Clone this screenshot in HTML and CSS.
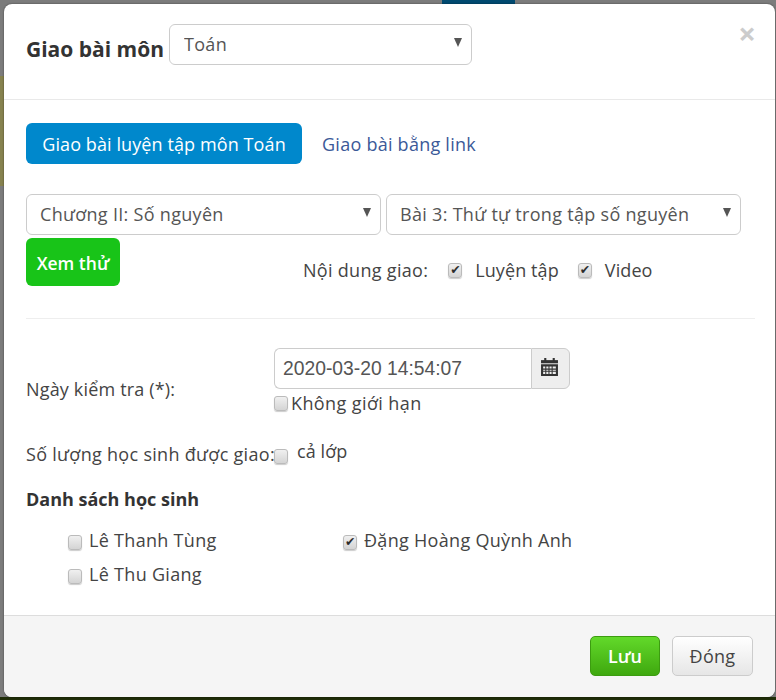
FILE: index.html
```html
<!DOCTYPE html>
<html lang="en">
<head>
    <meta charset="UTF-8">
    <meta name="viewport" content="width=device-width, initial-scale=1.0">
    <title>Giao bài</title>
    <link rel="stylesheet" href="styles.css">
</head>
<body>
    <!-- page behind the backdrop -->
    <div class="behind-tab"></div>
    <div class="behind-panel"></div>
    <div class="behind-bottom"></div>

    <div class="modal-card">
        <div class="modal-header">
            <span class="modal-title">Giao bài môn</span>
            <div class="select-wrap subject-select">
                <select><option>Toán</option></select>
            </div>
            <span class="close-btn">×</span>
        </div>

        <div class="modal-body">
            <div class="tab-row">
                <a class="btn-tab">Giao bài luyện tập môn Toán</a>
                <a class="link-tab">Giao bài bằng link</a>
            </div>

            <div class="select-row">
                <div class="select-wrap"><select><option>Chương II: Số nguyên</option></select></div>
                <div class="select-wrap"><select><option>Bài 3: Thứ tự trong tập số nguyên</option></select></div>
            </div>

            <div class="preview-row">
                <a class="btn-preview">Xem thử</a>
                <div class="content-type">
                    <span class="content-label">Nội dung giao:</span>
                    <label class="check-label"><input type="checkbox" checked><span>Luyện tập</span></label>
                    <label class="check-label"><input type="checkbox" checked><span>Video</span></label>
                </div>
            </div>

            <div class="divider"></div>

            <div class="date-row">
                <div class="row-label">Ngày kiểm tra (*):</div>
                <div class="date-col">
                    <div class="date-group">
                        <input class="date-input" type="text" value="2020-03-20 14:54:07">
                        <span class="date-addon">
                            <svg class="calendar-icon" width="17" height="18" viewBox="0 0 16 17">
                                <rect x="3" y="0" width="2" height="3" fill="#333"/>
                                <rect x="11" y="0" width="2" height="3" fill="#333"/>
                                <rect x="0" y="2" width="16" height="3" fill="#333"/>
                                <path fill="#333" fill-rule="evenodd" d="M0 6h16v11H0z M2 8v2h2V8z M5 8v2h2V8z M8 8v2h2V8z M11 8v2h3V8z M2 11v1h2v-1z M5 11v1h2v-1z M8 11v1h2v-1z M11 11v1h3v-1z M2 13v2h2v-2z M5 13v2h2v-2z M8 13v2h2v-2z M11 13v2h3v-2z"/>
                            </svg>
                        </span>
                    </div>
                    <label class="no-limit"><input type="checkbox"><span>Không giới hạn</span></label>
                </div>
            </div>

            <div class="count-row">
                <span class="count-label">Số lượng học sinh được giao:</span>
                <label class="whole-class"><input type="checkbox"><span>cả lớp</span></label>
            </div>

            <div class="list-title">Danh sách học sinh</div>
            <div class="student-grid">
                <label class="student"><input type="checkbox"><span>Lê Thanh Tùng</span></label>
                <label class="student"><input type="checkbox" checked><span>Đặng Hoàng Quỳnh Anh</span></label>
                <label class="student"><input type="checkbox"><span>Lê Thu Giang</span></label>
            </div>
        </div>

        <div class="modal-footer">
            <a class="btn-save">Lưu</a>
            <a class="btn-close">Đóng</a>
        </div>
    </div>
</body>
</html>
```

FILE: styles.css
```css
html, body {
    height: 700px;
    overflow: hidden;
}
body {
    font-family: "Open Sans", sans-serif;
    font-size: 18px;
    line-height: 24px;
    letter-spacing: 0.3px;
    color: #444;
    margin: 0;
    background-color: #7c7c7c;
    position: relative;
}
.behind-tab {
    position: absolute;
    left: 442px;
    top: 0;
    width: 73px;
    height: 4px;
    background: #004a70;
}
.behind-panel {
    position: absolute;
    left: 0;
    top: 76px;
    width: 5px;
    height: 110px;
    background: #86824f;
}
.behind-bottom {
    position: absolute;
    left: 0;
    top: 697px;
    width: 776px;
    height: 3px;
    background: #1f2d08;
}
.modal-card {
    position: absolute;
    left: 4px;
    top: 4px;
    width: 771px;
    height: 693px;
    box-sizing: border-box;
    background: #fff;
    border-radius: 8px;
    box-shadow: 0 0 2px rgba(0,0,0,0.5);
    overflow: hidden;
    display: flex;
    flex-direction: column;
}
.modal-header {
    height: 96px;
    box-sizing: border-box;
    border-bottom: 1px solid #e9e9e9;
    padding: 20px 22px 0;
    display: flex;
    align-items: flex-start;
    position: relative;
}
.modal-title {
    font-size: 21px;
    font-weight: 700;
    letter-spacing: 0;
    color: #333;
    margin-top: 13px;
    margin-right: 5px;
}
.subject-select {
    width: 303px;
}
.close-btn {
    position: absolute;
    right: 19px;
    top: 14px;
    font-size: 31px;
    font-weight: 700;
    line-height: 30px;
    letter-spacing: 0;
    color: #ccc;
}
.select-wrap {
    position: relative;
    height: 41px;
}
.select-wrap::after {
    content: "";
    position: absolute;
    right: 10px;
    top: 14px;
    border-left: 4px solid transparent;
    border-right: 4px solid transparent;
    border-top: 9px solid #555;
}
.select-wrap select {
    appearance: none;
    width: 100%;
    height: 41px;
    background: #fff;
    border: 1px solid #ccc;
    border-radius: 6px;
    padding: 0 14px 2px 13px;
    font-family: inherit;
    font-size: 18px;
    letter-spacing: 0.3px;
    color: #555;
    box-sizing: border-box;
}
.subject-select select {
    padding-left: 14px;
}
.modal-body {
    flex: 1;
    padding: 23px 21px 0 22px;
}
.tab-row {
    display: flex;
    align-items: center;
    gap: 20px;
}
.btn-tab {
    height: 41px;
    line-height: 43px;
    width: 276px;
    text-align: center;
    background: #0088cc;
    color: #fff;
    border-radius: 6px;
    letter-spacing: 0.1px;
}
.link-tab {
    color: #3b5998;
    letter-spacing: 0.25px;
}
.select-row {
    display: flex;
    gap: 5px;
    margin-top: 30px;
    width: 715px;
}
.select-row .select-wrap {
    flex: 1;
}
.preview-row {
    display: flex;
    margin-top: 3px;
}
.btn-preview {
    width: 94px;
    height: 48px;
    line-height: 50px;
    text-align: center;
    background: #18c418;
    color: #fff;
    border-radius: 6px;
    font-weight: 600;
    letter-spacing: 0;
    font-size: 17.5px;
}
.content-type {
    display: flex;
    gap: 19px;
    margin-left: 183px;
    margin-top: 19px;
    height: 26px;
    align-items: center;
}
.content-label {
    margin-right: 1px;
}
.check-label {
    display: flex;
    align-items: center;
    gap: 13px;
    letter-spacing: 0.1px;
}
input[type="checkbox"] {
    appearance: none;
    width: 14px;
    height: 15px;
    margin: 0;
    border: 1px solid #bbb;
    border-radius: 3px;
    background: linear-gradient(#f0f0f0, #d4d4d4);
    box-shadow: 0 1px 1px rgba(0,0,0,0.2);
    position: relative;
    flex: none;
}
input[type="checkbox"]:checked::after {
    content: "✔";
    position: absolute;
    left: 1px;
    top: -3px;
    font-family: "DejaVu Sans", sans-serif;
    font-size: 12.5px;
    line-height: 18px;
    letter-spacing: 0;
    color: #2c2c2c;
}
.divider {
    border-top: 1px solid #eee;
    margin-top: 32px;
    width: 729px;
}
.date-row {
    display: flex;
    margin-top: 29px;
}
.row-label {
    width: 248px;
    padding-top: 29px;
    letter-spacing: 0.17px;
}
.date-group {
    display: flex;
    width: 296px;
    height: 41px;
}
.date-input {
    width: 257px;
    box-sizing: border-box;
    border: 1px solid #ccc;
    border-right: 0;
    border-radius: 6px 0 0 6px;
    padding: 0 8px;
    font-family: "Liberation Sans", sans-serif;
    font-size: 19.3px;
    letter-spacing: 0;
    color: #555;
}
.date-addon {
    flex: 1;
    display: flex;
    align-items: center;
    justify-content: center;
    background: #eee;
    border: 1px solid #ccc;
    border-radius: 0 6px 6px 0;
}
.calendar-icon {
    margin: 0 2px 4px 0;
}
.no-limit {
    display: flex;
    align-items: center;
    margin-top: 2px;
    letter-spacing: 0.4px;
}
.no-limit input {
    margin: 1px 3px 0 0;
}
.count-row {
    display: flex;
    margin-top: 27px;
}
.count-label {
    width: 248px;
    white-space: nowrap;
}
.whole-class {
    display: flex;
    gap: 9px;
    letter-spacing: 0.1px;
}
.whole-class input {
    margin-top: 7px;
}
.whole-class span {
    margin-top: -3px;
}
.list-title {
    font-weight: 700;
    letter-spacing: 0;
    color: #333;
    margin-top: 21px;
}
.student-grid {
    display: grid;
    grid-template-columns: 275px 1fr;
    row-gap: 10px;
    margin: 17px 0 0 42px;
}
.student {
    display: flex;
    align-items: center;
    gap: 7px;
}
.student input {
    margin-top: 5px;
}
.modal-footer {
    height: 82px;
    box-sizing: border-box;
    background: #f5f5f5;
    border-top: 1px solid #ddd;
    padding: 20px 22px 0 0;
    display: flex;
    justify-content: flex-end;
    gap: 12px;
}
.btn-save, .btn-close {
    height: 40px;
    line-height: 38px;
    box-sizing: border-box;
    text-align: center;
    border-radius: 5px;
}
.btn-save {
    width: 70px;
    background: linear-gradient(#62d92a, #3fa80f);
    border: 1px solid #3c9c10;
    color: #fff;
    font-weight: 600;
    letter-spacing: 0;
}
.btn-close {
    width: 81px;
    background: linear-gradient(#fff, #e6e6e6);
    border: 1px solid #ccc;
    color: #444;
}
```
